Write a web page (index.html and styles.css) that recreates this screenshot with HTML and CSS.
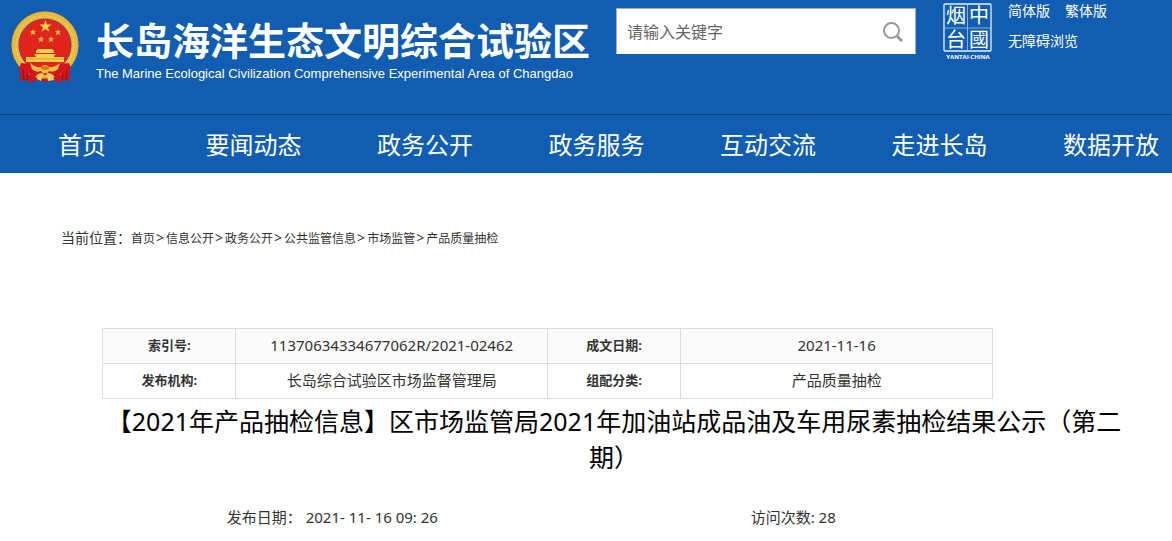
FILE: index.html
```
<!DOCTYPE html>
<html lang="zh-CN">
<head>
    <meta charset="utf-8">
    <title>长岛海洋生态文明综合试验区</title>
    <link rel="stylesheet" href="styles.css">
</head>
<body>
    <header class="header">
        <div class="top">
            <div class="brand">
                <svg class="emblem" viewBox="0 0 70 74" aria-hidden="true">
                    <path d="M11 52 L10 70 L17 69 L21 72 L27 69 L35 71 L44 69 L49 72 L53 69 L60 70 L59 52 Z" fill="#c9151c"/>
                    <circle cx="35" cy="34" r="30" fill="none" stroke="#e9b83c" stroke-width="7"/>
                    <circle cx="35" cy="34" r="33" fill="none" stroke="#d9a42f" stroke-width="1" stroke-dasharray="2 2"/>
                    <circle cx="35" cy="34" r="29" fill="none" stroke="#f7d768" stroke-width="1" stroke-dasharray="3 2"/>
                    <circle cx="35" cy="34" r="26" fill="#e1251b"/>
                    <g fill="#f5d04f">
                        <path d="M35.500 9 L37 13.500 L41.500 13.500 L38 16.200 L39.400 20.800 L35.500 18 L31.600 20.800 L33 16.200 L29.500 13.500 L34 13.500 Z"/>
                        <path id="star" d="M23 18 L23.800 20.300 L26 20.300 L24.300 21.800 L25 24.200 L23 22.800 L21 24.200 L21.700 21.800 L20 20.300 L22.200 20.300 Z"/>
                        <use href="#star" x="25"/>
                        <use href="#star" x="8" y="7"/>
                        <use href="#star" x="18" y="7"/>
                        <path d="M26 40 L28 38 H42 L44 40 V42 H26 Z"/>
                        <path d="M24 43 H46 L44 45 V46 H54 V51 H16 V46 H26 V45 Z"/>
                    </g>
                    <path d="M16 48 H54" stroke="#d99b27" stroke-width="1"/>
                    <path d="M11 52 L20 53 L26 59 L31 60 L34 64 H36 L39 60 L44 59 L50 53 L59 52 L61 58 L57 65 L51 62 L48 69 L42 63 L35 61 L28 63 L22 69 L19 62 L13 65 L9 58 Z" fill="#d5151b"/>
                    <path d="M20 52 Q26 57 31 56 Q35 52 39 56 Q44 57 50 52 L48 58 Q44 62 39 60 Q35 65 31 60 Q26 62 22 58 Z" fill="#edc044"/>
                    <path d="M30 57 Q35 53 40 57 Q35 61 30 57 Z" fill="#cf781d"/>
                    <path d="M27 64 L33 63 L31 70 L27 68 Z M37 63 L43 64 L44 69 L38 70 Z" fill="#f0cd5d"/>
                    <path d="M13 59 L14 69 M18 62 L17 69 M52 62 L53 69 M57 59 L56 69" stroke="#8f1118" stroke-width="1"/>
                </svg>
                <div class="brand-text">
                    <div class="brand-name">长岛海洋生态文明综合试验区</div>
                    <div class="brand-en">The Marine Ecological Civilization Comprehensive Experimental Area of Changdao</div>
                </div>
            </div>
            <form class="search">
                <input type="text" name="keyword" class="search-input" placeholder="请输入关键字" aria-label="请输入关键字">
                <button type="submit" class="search-btn" aria-label="搜索">
                    <svg viewBox="0 0 20 20" width="20" height="20" fill="none" stroke="#999" stroke-width="2">
                        <circle cx="8.500" cy="8.500" r="7.500"/>
                        <path d="M14 14 L19 19" stroke-width="3"/>
                    </svg>
                </button>
            </form>
            <svg class="seal" viewBox="0 0 50 58" role="img" aria-label="烟台 YANTAI CHINA">
                <rect x="1" y="1" width="47" height="47" rx="1" fill="none" stroke="#e6eef8" stroke-width="1.300"/>
                <path d="M24.500 1 V48 M1 25 H48" stroke="#b9d0ea" stroke-width="0.700"/>
                <g class="seal-char">
                    <text x="13" y="20">烟</text>
                    <text x="36" y="20">中</text>
                    <text x="13" y="44">台</text>
                    <text x="36" y="44">國</text>
                </g>
                <text class="seal-name" x="25" y="56">YANTAI·CHINA</text>
            </svg>
            <div class="tools">
                <div class="tools-row">
                    <a href="#">简体版</a>
                    <a href="#">繁体版</a>
                </div>
                <a href="#">无障碍浏览</a>
            </div>
        </div>
        <nav class="nav">
            <a href="#">首页</a>
            <a href="#">要闻动态</a>
            <a href="#">政务公开</a>
            <a href="#">政务服务</a>
            <a href="#">互动交流</a>
            <a href="#">走进长岛</a>
            <a href="#">数据开放</a>
        </nav>
    </header>

    <div class="position">
        当前位置：<a href="#">首页</a><span>&gt;</span><a href="#">信息公开</a><span>&gt;</span><a href="#">政务公开</a><span>&gt;</span><a href="#">公共监管信息</a><span>&gt;</span><a href="#">市场监管</a><span>&gt;</span><a href="#">产品质量抽检</a>
    </div>

    <main class="article">
        <table class="info">
            <tr>
                <th scope="row">索引号:</th>
                <td>11370634334677062R/2021-02462</td>
                <th scope="row">成文日期:</th>
                <td>2021-11-16</td>
            </tr>
            <tr>
                <th scope="row">发布机构:</th>
                <td>长岛综合试验区市场监督管理局</td>
                <th scope="row">组配分类:</th>
                <td>产品质量抽检</td>
            </tr>
        </table>
        <h1 class="title">【2021年产品抽检信息】区市场监管局2021年加油站成品油及车用尿素抽检结果公示（第二期）</h1>
        <div class="meta">
            <span>发布日期： 2021- 11- 16 09: 26</span>
            <span>访问次数: 28</span>
        </div>
    </main>
</body>
</html>
```

FILE: styles.css
```
* {
    box-sizing: border-box;
}

body {
    margin: 0;
    background: #fff;
    color: #333;
    font-family: "Noto Sans", "Noto Sans CJK SC", sans-serif;
    font-size: 15px;
}

a {
    color: inherit;
    text-decoration: none;
}

/* header */
.header {
    background: #115db1;
    color: #fff;
}

.top {
    display: flex;
    align-items: flex-start;
    height: 114px;
    padding-left: 10px;
}

.brand {
    display: flex;
    gap: 16px;
    width: 606px;
    padding-top: 11px;
}

.emblem {
    width: 70px;
    height: 74px;
}

.brand-text {
    padding-top: 1px;
    white-space: nowrap;
}

.brand-name {
    font-family: "Noto Sans CJK SC", sans-serif;
    font-size: 38px;
    font-weight: bold;
    line-height: 54px;
}

.brand-en {
    font-family: "Liberation Sans", Arial, sans-serif;
    font-size: 13px;
    line-height: 16px;
}

.search {
    display: flex;
    width: 300px;
    height: 46px;
    margin-top: 8px;
    background: #fff;
    border: 1px solid #aaa;
    border-bottom-color: #fff;
}

.search-input {
    flex: 1;
    min-width: 0;
    padding: 2px 10px 0;
    border: none;
    background: none;
    color: #666;
    font-family: inherit;
    font-size: 16px;
}

.search-input::placeholder {
    color: #666;
}

.search-btn {
    width: 44px;
    padding: 4px 0 0;
    border: none;
    background: none;
    cursor: pointer;
}

.seal {
    width: 50px;
    height: 58px;
    margin: 3px 0 0 27px;
}

.seal-char {
    fill: #fff;
    font-family: "Noto Sans CJK TC", sans-serif;
    font-size: 20px;
    text-anchor: middle;
}

.seal-name {
    fill: #fff;
    font-family: "Open Sans", sans-serif;
    font-size: 6px;
    font-weight: bold;
    text-anchor: middle;
}

.tools {
    margin-left: 15px;
    font-size: 14px;
    line-height: 30px;
    margin-top: -4px;
}

.tools-row {
    display: flex;
    gap: 15px;
}

.nav {
    display: flex;
    justify-content: space-between;
    padding: 2px 13px 0 34px;
    border-top: 1px solid #1a4379;
}

.nav a {
    width: 96px;
    font-size: 24px;
    line-height: 56px;
    text-align: center;
    white-space: nowrap;
}

/* breadcrumb */
.position {
    padding: 55px 61px 0;
    font-size: 14px;
    line-height: 20px;
}

.position a {
    font-size: 12px;
}

.position span {
    margin: 0 2px 0 1px;
}

/* article */
.article {
    padding: 79px 46px 0 102px;
}

.info {
    width: 87%;
    border-collapse: collapse;
    table-layout: fixed;
    text-align: center;
}

.info th,
.info td {
    width: 35%;
    height: 35px;
    padding: 0 0 2px;
    border: 1px solid #ddd;
    line-height: 20px;
}

.info th {
    width: 15%;
    font-size: 13px;
}

.info tr:first-child {
    background: #fbfbfb;
}

.title {
    margin: 4px 0 0;
    color: #000;
    font-size: 25px;
    font-weight: normal;
    line-height: 36px;
    text-align: center;
}

.meta {
    display: flex;
    padding: 32px 0 12px;
    line-height: 20px;
    text-align: center;
}

.meta span {
    width: 45%;
}
```
